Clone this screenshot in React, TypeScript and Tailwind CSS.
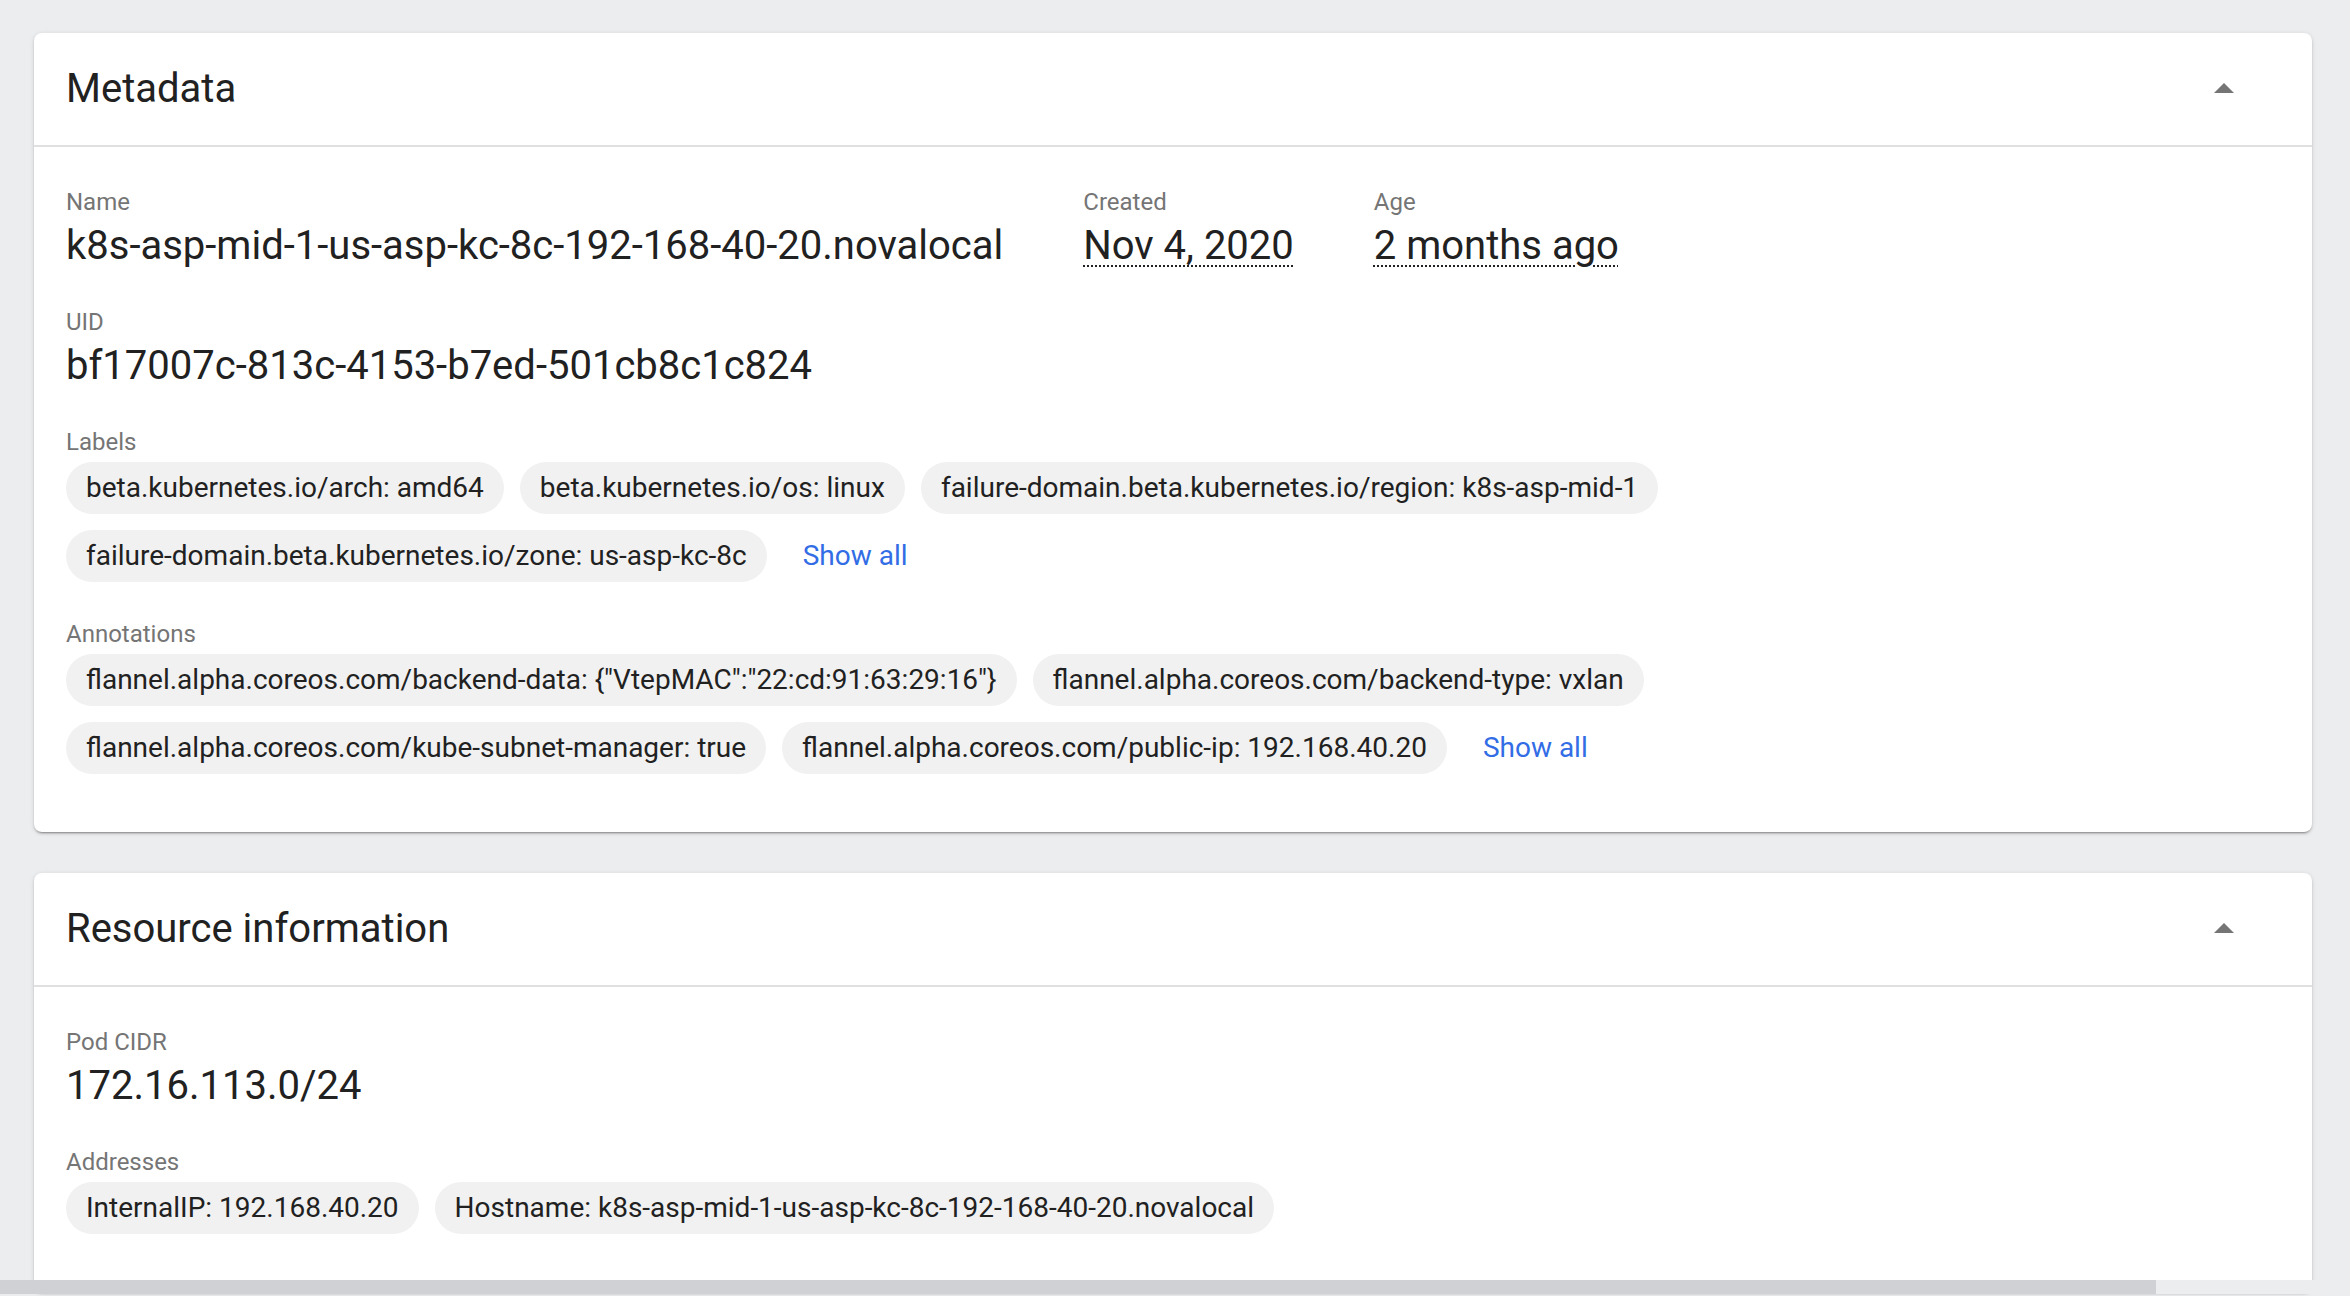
import { ReactNode } from "react";

const labels = [
  [
    "beta.kubernetes.io/arch: amd64",
    "beta.kubernetes.io/os: linux",
    "failure-domain.beta.kubernetes.io/region: k8s-asp-mid-1",
  ],
  ["failure-domain.beta.kubernetes.io/zone: us-asp-kc-8c"],
];

const annotations = [
  [
    'flannel.alpha.coreos.com/backend-data: {"VtepMAC":"22:cd:91:63:29:16"}',
    "flannel.alpha.coreos.com/backend-type: vxlan",
  ],
  [
    "flannel.alpha.coreos.com/kube-subnet-manager: true",
    "flannel.alpha.coreos.com/public-ip: 192.168.40.20",
  ],
];

const addresses = [
  [
    "InternalIP: 192.168.40.20",
    "Hostname: k8s-asp-mid-1-us-asp-kc-8c-192-168-40-20.novalocal",
  ],
];

const Label = ({ children }: { children: ReactNode }) => (
  <div className="text-[24px] leading-[32px] text-[#757575] mb-1">{children}</div>
);

const Value = ({ children, dotted }: { children: ReactNode; dotted?: boolean }) => (
  <div
    className={`text-[40px] leading-[48px] text-[#212121] whitespace-nowrap ${
      dotted ? "underline decoration-dotted decoration-2 underline-offset-[6px]" : ""
    }`}
  >
    {children}
  </div>
);

const Chip = ({ text }: { text: string }) => (
  <span className="h-[52px] px-5 flex items-center rounded-full bg-[#f1f1f1] text-[28px] text-[#212121] whitespace-nowrap">
    {text}
  </span>
);

const Chips = ({ rows, showAll }: { rows: string[][]; showAll?: boolean }) => (
  <div className="flex flex-col gap-4">
    {rows.map((row, i) => (
      <div key={i} className="flex items-center gap-4">
        {row.map((t) => (
          <Chip key={t} text={t} />
        ))}
        {showAll && i === rows.length - 1 && (
          <a href="#" className="ml-5 text-[28px] text-[#326de6] whitespace-nowrap">
            Show all
          </a>
        )}
      </div>
    ))}
  </div>
);

const Card = ({ title, children, className = "" }: { title: string; children: ReactNode; className?: string }) => (
  <section
    className={`bg-white rounded-lg shadow-[0_2px_2px_0_rgba(0,0,0,0.14),0_3px_1px_-2px_rgba(0,0,0,0.2),0_1px_5px_0_rgba(0,0,0,0.12)] ${className}`}
  >
    <div className="flex items-center justify-between pl-8 pr-16 py-8 border-b-2 border-[#e0e0e0]">
      <h2 className="text-[40px] leading-[48px] text-[#212121] font-normal">{title}</h2>
      <svg width="48" height="48" viewBox="0 0 24 24" fill="#757575">
        <path d="M7 14l5-5 5 5z" />
      </svg>
    </div>
    {children}
  </section>
);

export default function App() {
  return (
    <div className="relative h-[1296px] overflow-hidden bg-[#ecedef] pt-[33px] pl-[34px] pr-[38px] font-['Roboto',sans-serif]">
      <Card title="Metadata">
        <div className="px-8 pt-[39px] pb-[58px] flex flex-col gap-9">
          <div className="flex gap-20">
            <div>
              <Label>Name</Label>
              <Value>k8s-asp-mid-1-us-asp-kc-8c-192-168-40-20.novalocal</Value>
            </div>
            <div>
              <Label>Created</Label>
              <Value dotted>Nov 4, 2020</Value>
            </div>
            <div>
              <Label>Age</Label>
              <Value dotted>2 months ago</Value>
            </div>
          </div>
          <div>
            <Label>UID</Label>
            <Value>bf17007c-813c-4153-b7ed-501cb8c1c824</Value>
          </div>
          <div>
            <Label>Labels</Label>
            <Chips rows={labels} showAll />
          </div>
          <div>
            <Label>Annotations</Label>
            <Chips rows={annotations} showAll />
          </div>
        </div>
      </Card>

      <Card title="Resource information" className="mt-[41px]">
        <div className="px-8 pt-[39px] pb-[58px] flex flex-col gap-9">
          <div>
            <Label>Pod CIDR</Label>
            <Value>172.16.113.0/24</Value>
          </div>
          <div>
            <Label>Addresses</Label>
            <Chips rows={addresses} />
          </div>
        </div>
      </Card>

      {/* horizontal scrollbar */}
      <div className="absolute left-0 bottom-[2px] h-[14px] w-[2316px] bg-[#ecedef]">
        <div className="h-full w-[2156px] bg-[#d0d1d4]" />
      </div>
    </div>
  );
}
